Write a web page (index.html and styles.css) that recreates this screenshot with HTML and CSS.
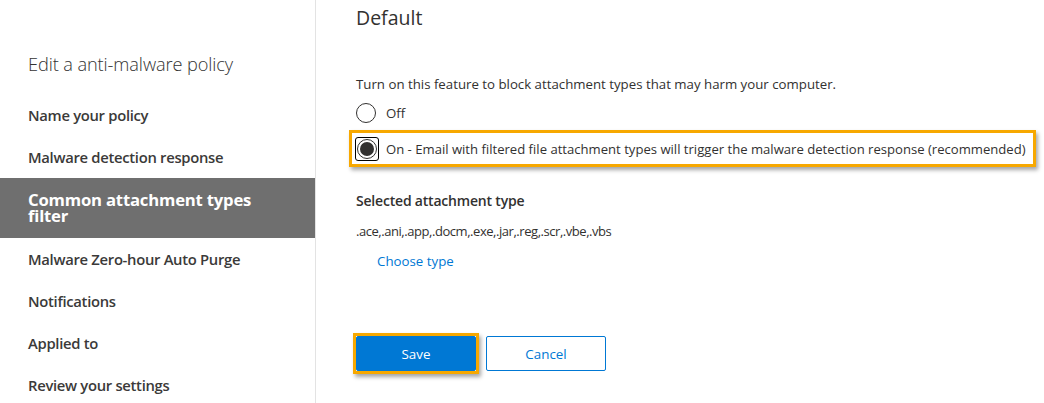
FILE: index.html
```html
<!DOCTYPE html>
<html>
<head>
<meta charset="utf-8">
<link rel="stylesheet" href="styles.css">
</head>
<body>
<div class="page">
  <aside class="side">
    <div class="side-title">Edit a anti-malware policy</div>
    <nav class="nav">
      <div class="nav-item">Name your policy</div>
      <div class="nav-item">Malware detection response</div>
      <div class="nav-item active">Common attachment types filter</div>
      <div class="nav-item">Malware Zero-hour Auto Purge</div>
      <div class="nav-item">Notifications</div>
      <div class="nav-item">Applied to</div>
      <div class="nav-item">Review your settings</div>
    </nav>
  </aside>
  <main class="main">
    <h1 class="heading">Default</h1>
    <p class="desc">Turn on this feature to block attachment types that may harm your computer.</p>
    <div class="radios">
      <div class="radio-row">
        <span class="radio"></span>
        <span class="radio-label">Off</span>
      </div>
      <div class="radio-row callout">
        <span class="focus"><span class="radio checked"></span></span>
        <span class="radio-label">On - Email with filtered file attachment types will trigger the malware detection response (recommended)</span>
      </div>
    </div>
    <h2 class="sub">Selected attachment type</h2>
    <div class="types">.ace,.ani,.app,.docm,.exe,.jar,.reg,.scr,.vbe,.vbs</div>
    <a class="link">Choose type</a>
    <div class="actions">
      <span class="btn-wrap"><button class="btn primary">Save</button></span>
      <button class="btn secondary">Cancel</button>
    </div>
  </main>
</div>
</body>
</html>
```

FILE: styles.css
```css
* { box-sizing: border-box; }
html, body { margin: 0; padding: 0; background: #fff; }
body {
  font-family: "Open Sans", "Noto Sans", sans-serif;
  color: #323130;
  width: 1044px;
  height: 403px;
  overflow: hidden;
}
.page {
  display: flex;
  height: 403px;
}
.side {
  width: 316px;
  flex: none;
  border-right: 1px solid #e3e3e3;
  padding-top: 52px;
}
.side-title {
  padding-left: 28px;
  font-size: 18.2px;
  font-weight: 300;
  color: #333;
  line-height: 24px;
  letter-spacing: -0.1px;
}
.nav {
  margin-top: 18px;
  display: flex;
  flex-direction: column;
}
.nav-item {
  padding: 0 60px 0 28px;
  height: 42px;
  display: flex;
  align-items: center;
  font-size: 14.8px;
  font-weight: 600;
  color: #3b3a39;
  letter-spacing: -0.3px;
}
.nav-item.active {
  height: 60px;
  margin: 0;
  background: #6f6f6f;
  color: #fff;
  font-size: 16.7px;
  font-weight: 700;
  line-height: 16px;
  letter-spacing: -0.2px;
  padding-right: 50px;
}
.main {
  flex: 1;
  padding-left: 40px;
  position: relative;
}
.heading {
  margin: 5px 0 0;
  font-size: 19.5px;
  font-weight: 400;
  line-height: 26px;
  color: #323130;
}
.desc {
  margin: 44px 0 0;
  font-size: 13.25px;
  line-height: 18px;
}
.radios {
  margin-top: 10px;
  display: flex;
  flex-direction: column;
  gap: 14px;
}
.radio-row {
  display: flex;
  align-items: center;
  gap: 10px;
  height: 20px;
}
.radio {
  width: 20px;
  height: 20px;
  border: 1px solid #323130;
  border-radius: 50%;
  background: #fff;
  flex: none;
  position: relative;
}
.radio.checked::after {
  content: "";
  position: absolute;
  left: 2px; top: 2px;
  width: 14px; height: 14px;
  border-radius: 50%;
  background: #323130;
}
.focus {
  display: inline-flex;
  padding: 1px;
  border: 1px solid #000;
  border-radius: 3px;
  margin: -2px;
}
.callout {
  height: 37px;
  margin-left: -7px;
  padding-left: 5px;
  width: 687px;
  border: 3px solid #f7a800;
  box-shadow: 2px 3px 4px rgba(0,0,0,0.35);
  margin-top: -7px;
  gap: 9px;
}
.radio-label {
  font-size: 13.25px;
  white-space: nowrap;
}
.callout .radio-label {
  font-size: 13.1px;
}
.sub {
  margin: 24px 0 0;
  font-size: 14px;
  font-weight: 600;
  line-height: 20px;
  letter-spacing: -0.2px;
}
.types {
  margin-top: 10px;
  font-size: 13px;
  line-height: 20px;
  letter-spacing: -0.45px;
}
.link {
  display: block;
  margin: 11px 0 0 21px;
  font-size: 13.3px;
  line-height: 18px;
  color: #0078d4;
}
.actions {
  margin-top: 66px;
  display: flex;
  align-items: center;
  gap: 10px;
}
.btn-wrap {
  display: inline-flex;
  border: 3px solid #f7a800;
  margin: -3px;
  box-shadow: 2px 3px 4px rgba(0,0,0,0.35);
}
.btn {
  width: 120px;
  height: 35px;
  font-family: "Open Sans", "Noto Sans", sans-serif;
  font-size: 13.4px;
  border-radius: 2px;
  padding: 0;
}
.primary {
  background: #0078d4;
  color: #fff;
  border: 1px solid #0078d4;
}
.secondary {
  background: #fff;
  color: #0078d4;
  border: 1px solid #0078d4;
}
```
